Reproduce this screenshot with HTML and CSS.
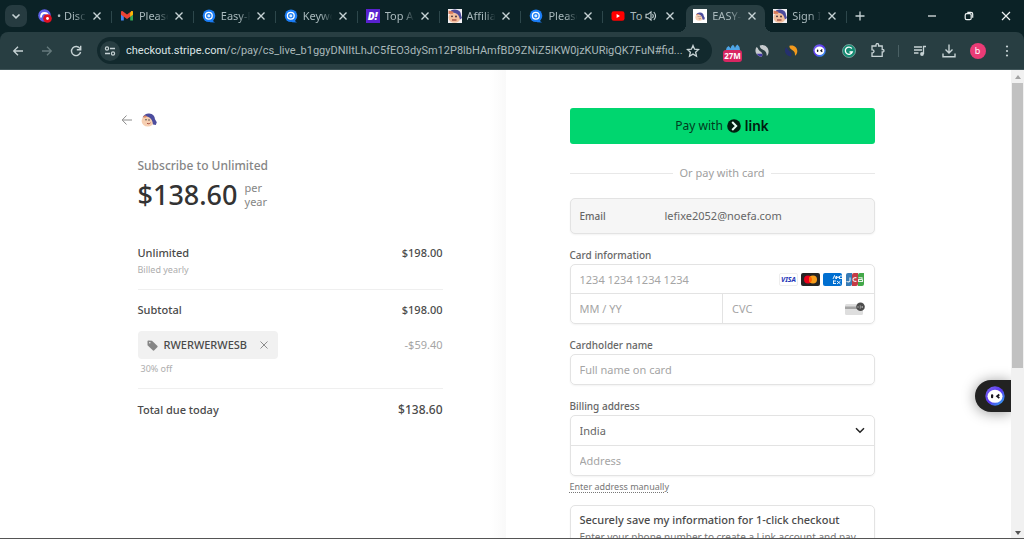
FILE: index.html
```html
<!DOCTYPE html>
<html lang="en">
<head>
<meta charset="utf-8">
<title>EASY-PEASY.AI checkout</title>
<link rel="stylesheet" href="styles.css">
</head>
<body>
<svg class="defs" aria-hidden="true">
  <symbol id="x" viewBox="0 0 10 10"><path d="M1.500 1.500l7 7M8.500 1.500l-7 7" fill="none" stroke="currentColor" stroke-width="1.400"/></symbol>
  <symbol id="q" viewBox="0 0 14 14"><circle cx="7" cy="6.800" r="6.300" fill="#1b7df5"/><path d="M8 10l5 3.600-5-.4z" fill="#1b7df5"/><circle cx="6.800" cy="6.800" r="3.400" fill="none" stroke="#fff" stroke-width="1.300"/><circle cx="6.800" cy="6.800" r="1.500" fill="#d9ebff"/></symbol>
  <symbol id="face" viewBox="0 0 16 14"><ellipse cx="6.800" cy="8" rx="6.200" ry="5.600" fill="#f6cfb2"/><path d="M1.500 4.500C3 1.500 5.500.4 8.200.6c3.600.3 5.600 2.300 5.800 5.600l1.800 3-1 2.800-2.800-.4-.5-2.600C11 6.500 9 4.600 6.800 3.800 5 3.300 3 3.500 1.500 4.500z" fill="#4c4d9e"/><path d="M2 4.200C3 2.500 4.500 2 6.200 3.500L4 4.800z" fill="#e08a62"/><circle cx="5" cy="6.800" r=".7" fill="#333"/><circle cx="8" cy="7" r=".7" fill="#333"/><path d="M6 10.300c1.500.8 2.500.5 3.500-.5" stroke="#a3473a" stroke-width=".9" fill="none"/></symbol>
  <symbol id="facebig" viewBox="0 0 14 14"><path d="M0 0h14v14H0z" fill="#f3f1f4"/><ellipse cx="6.500" cy="8.500" rx="6" ry="5.300" fill="#f3bf9d"/><path d="M1 3.500C2.500 1.500 4.500.5 7 .6c3.500.2 6 2 6 5.400l1 3-2 1.500-1-3C10 5.500 8.500 4.300 6 3.800z" fill="#4c4a9b"/><path d="M.5 1.500l5 1.300-.5 2L.5 5z" fill="#da7c5a"/><circle cx="4" cy="7.300" r=".9" fill="#382c37"/><circle cx="8" cy="7.500" r=".9" fill="#382c37"/><path d="M4 11h4.500" stroke="#963b35" stroke-width="1.200"/></symbol>
  <symbol id="facesmall" viewBox="0 0 14 14"><path d="M0 0h14v14H0z" fill="#fff"/><use href="#face" x="2" y="3" width="10" height="9"/></symbol>
  <symbol id="bot" viewBox="0 0 20 20"><linearGradient id="botg" x2="1" y2="1"><stop offset="0" stop-color="#7b6cf0"/><stop offset=".5" stop-color="#5a35f0"/><stop offset="1" stop-color="#28b7ef"/></linearGradient><circle cx="10" cy="10" r="9.700" fill="url(#botg)"/><ellipse cx="10" cy="10.300" rx="7.500" ry="6.500" fill="#fff"/><rect x="6" y="8.300" width="2.200" height="4" rx="1" fill="#17151f"/><path d="M14.300 8.500l-2.200 1.800 2.200 1.800" fill="none" stroke="#17151f" stroke-width="1.800"/></symbol>
</svg>

<header class="browser">
  <div class="strip">
    <button class="search-tabs" aria-label="Search tabs"><svg width="10" height="10" viewBox="0 0 10 10"><path d="M1.500 3.500L5 6.800l3.500-3.300" fill="none" stroke="currentColor" stroke-width="1.600"/></svg></button>
    <nav class="tabs">
      <div class="tab"><svg class="fav" viewBox="0 0 14 14"><circle cx="6.500" cy="6.500" r="6.300" fill="#5f62e8"/><path d="M3 8.500c0-3 1-4.500 3.500-4.500S10 5 10 7" fill="none" stroke="#fff" stroke-width="1.800"/><circle cx="9.500" cy="9.500" r="4.300" fill="#e01020"/><circle cx="9.500" cy="9.500" r="1.400" fill="#fff"/></svg><span class="name">• Discord</span><button class="close" aria-label="Close tab"><svg><use href="#x"/></svg></button></div>
      <div class="tab"><svg class="fav" viewBox="0 0 14 14"><path d="M1 2.500v9h2.800V6.300z" fill="#4285f4"/><path d="M13 2.500v9h-2.800V6.300z" fill="#34a853"/><path d="M1 3.200v2.600l6 4.300 6-4.300V3.200c0-1-1-1.400-1.700-.9L7 5.600 2.700 2.300C2 1.800 1 2.200 1 3.200z" fill="#ea4335"/><path d="M10.200 4.200v3.500L13 5.600V3.200c0-1.200-1.200-1.500-1.800-1z" fill="#fbbc04"/></svg><span class="name">Please con</span><button class="close" aria-label="Close tab"><svg><use href="#x"/></svg></button></div>
      <div class="tab"><svg class="fav"><use href="#q"/></svg><span class="name">Easy-Peasy</span><button class="close" aria-label="Close tab"><svg><use href="#x"/></svg></button></div>
      <div class="tab"><svg class="fav"><use href="#q"/></svg><span class="name">Keyword</span><button class="close" aria-label="Close tab"><svg><use href="#x"/></svg></button></div>
      <div class="tab"><span class="fav dealify">D!</span><span class="name">Top AI</span><button class="close" aria-label="Close tab"><svg><use href="#x"/></svg></button></div>
      <div class="tab"><svg class="fav"><use href="#facebig"/></svg><span class="name">Affiliate</span><button class="close" aria-label="Close tab"><svg><use href="#x"/></svg></button></div>
      <div class="tab"><svg class="fav"><use href="#q"/></svg><span class="name">Please con</span><button class="close" aria-label="Close tab"><svg><use href="#x"/></svg></button></div>
      <div class="tab last"><svg class="fav" viewBox="0 0 14 14"><rect x=".5" y="2.300" width="13" height="9.400" rx="2.300" fill="#f00"/><path d="M5.600 5v4L9 7z" fill="#fff"/></svg><span class="name">To</span><svg class="sound" viewBox="0 0 12 12"><path d="M1 4.300h2L6 1.800v8.400L3 7.700H1z" fill="none" stroke="currentColor" stroke-width="1.100"/><path d="M7.500 4q1.500 2 0 4M8.800 2q3.500 4 0 8" fill="none" stroke="currentColor" stroke-width="1.100"/></svg><button class="close" aria-label="Close tab"><svg><use href="#x"/></svg></button></div>
      <div class="tab active"><svg class="fav"><use href="#facesmall"/></svg><span class="name">EASY-PEASY</span><button class="close" aria-label="Close tab"><svg><use href="#x"/></svg></button></div>
      <div class="tab"><svg class="fav"><use href="#facebig"/></svg><span class="name">Sign In</span><button class="close" aria-label="Close tab"><svg><use href="#x"/></svg></button></div>
    </nav>
    <button class="icon new-tab" aria-label="New tab"><svg width="10" height="10" viewBox="0 0 10 10"><path d="M5 .5v9M.5 5h9" stroke="currentColor" stroke-width="1.300"/></svg></button>
    <div class="window-controls">
      <button class="icon" aria-label="Minimize"><svg width="10" height="10" viewBox="0 0 10 10"><path d="M1 5h8" stroke="currentColor" stroke-width="1.200"/></svg></button>
      <button class="icon" aria-label="Restore"><svg width="10" height="10" viewBox="0 0 10 10"><rect x="1.200" y="2.700" width="6" height="6" rx="1.500" fill="none" stroke="currentColor" stroke-width="1.200"/><path d="M3.300 1.300H7Q8.700 1.300 8.700 3v3.700" fill="none" stroke="currentColor" stroke-width="1.200"/></svg></button>
      <button class="icon" aria-label="Close window"><svg width="10" height="10" viewBox="0 0 10 10"><path d="M1 1l8 8M9 1L1 9" stroke="currentColor" stroke-width="1.200"/></svg></button>
    </div>
  </div>

  <div class="toolbar">
    <button class="icon nav" aria-label="Back"><svg width="12" height="12" viewBox="0 0 12 12"><path d="M11 6H2M6 1.700L1.700 6 6 10.300" fill="none" stroke="currentColor" stroke-width="1.300"/></svg></button>
    <button class="icon nav" disabled aria-label="Forward"><svg width="12" height="12" viewBox="0 0 12 12"><path d="M1 6h9M6 1.700L10.300 6 6 10.300" fill="none" stroke="currentColor" stroke-width="1.300"/></svg></button>
    <button class="icon nav" aria-label="Reload"><svg width="12" height="12" viewBox="0 0 12 12"><path d="M10 3.600A4.600 4.600 0 1 0 10.600 7" fill="none" stroke="currentColor" stroke-width="1.400"/><path d="M10.700.8v4H6.800" fill="none" stroke="currentColor" stroke-width="1.400"/></svg></button>
    <div class="omnibox">
      <button class="site-info" aria-label="Site information"><svg width="12" height="12" viewBox="0 0 12 12"><circle cx="3" cy="3.500" r="1.600" fill="none" stroke="currentColor" stroke-width="1.200"/><path d="M6 3.500h5M1 8.500h5" stroke="currentColor" stroke-width="1.400"/><circle cx="9" cy="8.500" r="1.600" fill="none" stroke="currentColor" stroke-width="1.200"/></svg></button>
      <span class="url">checkout.stripe.com<span class="path">/c/pay/cs_live_b1ggyDNlItLhJC5fEO3dySm12P8lbHAmfBD9ZNiZ5IKW0jzKURigQK7FuN#fid...</span></span>
      <button class="icon bookmark" aria-label="Bookmark"><svg width="14" height="14" viewBox="0 0 14 14"><path d="M7 1.500l1.600 3.700 4 .3-3 2.700.9 4L7 10.100l-3.500 2.100.9-4-3-2.700 4-.3z" fill="none" stroke="currentColor" stroke-width="1.300"/></svg></button>
    </div>
    <div class="extensions">
      <button class="icon ranked" aria-label="Traffic rank"><svg width="14" height="6" viewBox="0 0 14 6"><path d="M0 6q0-2.500 2.500-4Q4 3 4.500 4.500 5 2 7 .8 8.500 2 9 4 9.500 1.500 11.500.5 14 2.500 14 6z" fill="#4fa6e8"/></svg><span class="badge">27M</span></button>
      <button class="icon" aria-label="Extension"><svg width="14" height="14" viewBox="0 0 14 14"><path d="M1.300 3.200C3 2.600 3 6 5.500 7.500c2 1.300 2.300 3 1.300 5.300C1.500 12.500-1 7.500 1.300 3.200z" fill="#c7cbce"/><path d="M1.500 9.700h5.800q.3 1.500-.6 3.100Q3.500 12.800 1.500 9.700z" fill="#4437a4"/><path d="M4.800 1.500C9-.5 13.700 3 13.600 7.500c0 2-.6 3.500-1.800 4.500C11.500 8.500 11 7.500 8.500 6 6.500 5 4.500 3.500 4.800 1.500z" fill="#c7cbce"/></svg></button>
      <button class="icon" aria-label="Extension"><svg width="14" height="14" viewBox="0 0 14 14"><path d="M1.800 3.500C3.500 3 3.500 6 6 7.500c1.500 1 2 2.800 1 5C2 12.200-.5 7.500 1.800 3.500z" fill="#25306e"/><path d="M5.500 1.800C9.500.3 13.500 3.200 13.300 7.500c-.1 1.800-1 3.400-2.300 4.300C11 8.500 10.500 7.500 8.500 6.200 6.500 5 5 3.700 5.500 1.800z" fill="#f39a1d"/></svg></button>
      <button class="icon" aria-label="Assistant"><svg width="13" height="13"><use href="#bot"/></svg></button>
      <button class="icon" aria-label="Writing checker"><svg width="14" height="14" viewBox="0 0 14 14"><circle cx="7" cy="7" r="6.500" fill="#138a72" stroke="#a9c8c2" stroke-width=".6"/><path d="M9.800 4.500A3.600 3.600 0 1 0 10.300 8H7.500" fill="none" stroke="#fff" stroke-width="1.300"/></svg></button>
      <button class="icon" aria-label="Extensions"><svg width="15" height="15" viewBox="0 0 15 15"><path d="M2 3h4V1.800a1 1 0 0 1 2.600 0V3h3.600v3.500h.6a1.100 1.100 0 0 1 0 2.400h-.6v4.500H2V9.800h.5a1.500 1.500 0 0 0 0-3H2z" fill="none" stroke="currentColor" stroke-width="1.300"/></svg></button>
    </div>
    <span class="divider"></span>
    <button class="icon" aria-label="Media"><svg width="14" height="12" viewBox="0 0 14 12"><path d="M1 2h8M1 5h8M1 8h4.500M10.500 9V1.500H13" fill="none" stroke="currentColor" stroke-width="1.300"/><circle cx="9" cy="9" r="1.900" fill="currentColor"/></svg></button>
    <button class="icon" aria-label="Downloads"><svg width="14" height="14" viewBox="0 0 14 14"><path d="M7 .5v8M3.500 5.500L7 9l3.500-3.500M1 9.500v3.300h12V9.500" fill="none" stroke="currentColor" stroke-width="1.400"/></svg></button>
    <button class="icon" aria-label="Profile"><span class="avatar">b</span></button>
    <button class="icon" aria-label="Menu"><svg width="4" height="14" viewBox="0 0 4 14"><g fill="currentColor"><circle cx="2" cy="2.500" r="1.100"/><circle cx="2" cy="7" r="1.100"/><circle cx="2" cy="11.500" r="1.100"/></g></svg></button>
  </div>
</header>

<div class="viewport">
  <main class="checkout">
    <section class="summary">
      <div class="column">
        <a class="back" href="#" aria-label="Back to Easy-Peasy"><svg width="12" height="12" viewBox="0 0 12 12"><path d="M11 6H1.500M5.500 1.500L1.200 6l4.300 4.500" fill="none" stroke="#8c8c8c" stroke-width="1"/></svg><svg width="16" height="14"><use href="#face"/></svg></a>
        <h1 class="title">Subscribe to Unlimited</h1>
        <div class="price"><strong>$138.60</strong><span>per<br>year</span></div>
        <div class="line first"><span>Unlimited</span><span>$198.00</span></div>
        <div class="note">Billed yearly</div>
        <div class="line ruled"><span>Subtotal</span><span>$198.00</span></div>
        <div class="promo">
          <div class="chip"><svg width="11" height="11" viewBox="0 0 11 11"><path d="M.5 1.500v3.700L6 10.500q.5.300 1 0l3.500-3.500q.3-.5 0-1L5 .8 1.200.5Q.5.5.5 1.500z" fill="#858585"/><circle cx="2.800" cy="2.800" r=".8" fill="#f1f1f1"/></svg><span>RWERWERWESB</span><button aria-label="Remove promotion code"><svg width="10" height="10" viewBox="0 0 10 10"><path d="M1.500 1.500l7 7M8.500 1.500l-7 7" stroke="#8c8c8c" stroke-width="1"/></svg></button></div>
          <span class="discount">-$59.40</span>
        </div>
        <div class="note off">30% off</div>
        <div class="line ruled total"><span>Total due today</span><span>$138.60</span></div>
      </div>
    </section>

    <section class="payment">
      <form class="column">
        <button type="button" class="link-pay">Pay with <svg width="14" height="14" viewBox="0 0 14 14"><circle cx="7" cy="7" r="6.800" fill="#011e0f"/><path d="M5.200 3l4 4-4 4" fill="none" stroke="#e8fff3" stroke-width="2"/></svg><b>link</b></button>
        <div class="separator">Or pay with card</div>
        <div class="email"><span>Email</span><span>lefixe2052@noefa.com</span></div>

        <label class="label" for="number">Card information</label>
        <div class="group card">
          <div class="cell number"><input id="number" placeholder="1234 1234 1234 1234">
            <span class="brands">
              <svg width="19" height="13" viewBox="0 0 19 13"><rect x=".5" y=".5" width="18" height="12" rx="1.500" fill="#fff" stroke="#eee"/><text class="visa" x="9.500" y="9" text-anchor="middle">VISA</text></svg>
              <svg width="19" height="13" viewBox="0 0 19 13"><rect width="19" height="13" rx="2" fill="#252525"/><circle cx="7" cy="6.500" r="4" fill="#eb001b"/><circle cx="12" cy="6.500" r="4" fill="#f79e1b"/><path d="M9.500 3.400a4 4 0 0 1 0 6.200 4 4 0 0 1 0-6.200z" fill="#ff5f00"/></svg>
              <svg width="19" height="13" viewBox="0 0 19 13"><rect width="19" height="13" rx="2" fill="#016fd0"/><path d="M10 6l1.500-3.500L13 6M13.500 6V3l1.500 2 1.500-2v3M17 3h2M17 5.500h2M10 8h3M10 10.500h3M10.500 7.500v3.500M14 8l3.500 3M17.500 8L14 11" stroke="#fff" stroke-width=".9" fill="none"/></svg>
              <svg width="19" height="13" viewBox="0 0 19 13"><path d="M3 0h4v11q0 2-2 2H1V2q0-2 2-2z" fill="#377bb5"/><path d="M9 0h4v11q0 2-2 2H7V2q0-2 2-2z" fill="#c43a45"/><path d="M15 0h4v11q0 2-2 2h-4V2q0-2 2-2z" fill="#43a849"/><path d="M1.500 8.500q3.500 1 3.500-1V4.500M11.500 4.700q-3.500-.5-3.500 1.800t3.500 1.800M13.500 4.700h3.500v1.800h-3.500v2h4v-2" fill="none" stroke="#eee" stroke-width="1.100"/></svg>
            </span>
          </div>
          <div class="cell"><input aria-label="Expiration" placeholder="MM / YY"></div>
          <div class="cell cvc"><input aria-label="CVC" placeholder="CVC"><svg width="20" height="14" viewBox="0 0 20 14"><rect x="0" y="2" width="18" height="11" rx="1.500" fill="#dedede"/><path d="M0 4.500h18v2.500H0z" fill="#a5a5a5"/><circle cx="15.500" cy="4.800" r="4.300" fill="#4c4c4c"/><path d="M13 4v2M14.500 4H16v2h-1.500M17.500 4v2" stroke="#bbb" stroke-width=".7" fill="none"/></svg></div>
        </div>

        <label class="label" for="holder">Cardholder name</label>
        <div class="group"><div class="cell"><input id="holder" placeholder="Full name on card"></div></div>

        <label class="label" for="country">Billing address</label>
        <div class="group">
          <div class="cell country"><select id="country"><option>India</option></select><svg width="10" height="7" viewBox="0 0 10 7"><path d="M1 1.200l4 4 4-4" fill="none" stroke="#222" stroke-width="1.500"/></svg></div>
          <div class="cell ruled-cell"><input aria-label="Address" placeholder="Address"></div>
        </div>
        <a class="manual" href="#">Enter address manually</a>
        <div class="save"><strong>Securely save my information for 1-click checkout</strong><p>Enter your phone number to create a Link account and pay faster on Easy-Peasy.AI and everywhere Link is accepted.</p></div>
      </form>
    </section>
    <button class="assistant" aria-label="Open assistant"><svg width="20" height="20"><use href="#bot"/></svg></button>
  </main>
  <div class="scrollbar"><span class="arrow up"></span><span class="thumb"></span><span class="arrow down"></span></div>
</div>
</body>
</html>
```

FILE: styles.css
```css
* { box-sizing: border-box; }
body {
  margin: 0;
  height: 100vh;
  display: flex;
  flex-direction: column;
  overflow: hidden;
  font: 11px/18px "Noto Sans", "Open Sans", sans-serif;
  color: #4a4a4a;
  background: #fff;
}
button, input, select { font: inherit; color: inherit; border: 0; padding: 0; background: none; }
svg { display: block; flex: none; }
.defs { position: absolute; width: 0; height: 0; }

/* Browser frame */
.browser { flex: none; background: #0b2226; color: #c7d3d5; }
.strip { display: flex; align-items: center; height: 32px; }
.search-tabs {
  width: 22px; height: 22px; margin-left: 5px; border-radius: 7px;
  background: #263b40; display: grid; place-items: center;
}
.tabs { display: flex; flex: 0 1 817px; min-width: 0; margin-left: 3px; align-self: stretch; }
.tab {
  position: relative; flex: 1 1 0; min-width: 0; display: flex; align-items: center;
  padding: 0 10px 0 8px;
}
.tab::after { content: ""; position: absolute; right: 0; top: 11px; width: 1px; height: 12px; background: #2d474b; }
.tab.active::after, .tab.last::after { display: none; }
.fav { width: 14px; height: 14px; flex: none; }
.dealify { background: #5a22d0; color: #fff; font: italic 900 10px/14px "Noto Sans", sans-serif; text-align: center; }
.name {
  flex: 1; min-width: 0; margin: 0 5px; overflow: hidden; white-space: nowrap;
  color: #a9b9bc; -webkit-mask-image: linear-gradient(90deg, #000 60%, transparent 98%);
  mask-image: linear-gradient(90deg, #000 60%, transparent 98%);
}
.last .name { margin-right: 0; mask-image: none; -webkit-mask-image: none; }
.sound { width: 12px; height: 12px; margin-right: 8px; }
.close { width: 10px; height: 10px; }
.close svg { width: 10px; height: 10px; }
.active { background: #283e42; margin: 5px 0 0 1px; padding: 0 8px 5px 7px; border-radius: 8px 8px 0 0; }
.active::before {
  content: ""; position: absolute; left: -8px; right: -8px; bottom: 0; height: 8px;
  background:
    radial-gradient(circle at 0 0, transparent 8px, #283e42 8px) left / 8px 8px no-repeat,
    radial-gradient(circle at 100% 0, transparent 8px, #283e42 8px) right / 8px 8px no-repeat;
}
.icon { display: grid; place-items: center; width: 29px; height: 28px; flex: none; }
.icon:disabled { color: #667a7d; }
.new-tab { width: 26px; }
.window-controls { display: flex; margin-left: auto; color: #eef2f2; }
.window-controls .icon { width: 37px; }
.toolbar {
  display: flex; align-items: center; height: 38px; padding: 0 3px; background: #283e42;
  border-radius: 8px 8px 0 0; border-bottom: 1px solid #41565a;
}
.omnibox {
  display: flex; align-items: center; flex: 1; min-width: 0; height: 27px; margin-left: 7px;
  padding: 0 10px 0 3px; border-radius: 14px; background: #12292d;
}
.omnibox .bookmark { width: 18px; margin-left: auto; }
.site-info { width: 20px; height: 20px; border-radius: 10px; background: #283e42; display: grid; place-items: center; flex: none; }
.url {
  margin-left: 6px; min-width: 0; overflow: hidden; white-space: nowrap;
  font-family: Roboto, "Noto Sans", sans-serif; font-size: 11px; color: #dbe4e5;
}
.path { color: #a9b8ba; }
.extensions { display: flex; margin-left: 6px; }
.ranked { position: relative; padding-bottom: 8px; }
.badge {
  position: absolute; left: 5px; top: 13px; width: 19px; height: 12px; border-radius: 3px;
  background: #d92662; color: #fff; font: bold 8px/12px "Noto Sans", sans-serif; text-align: center;
}
.divider { width: 1px; height: 12px; margin: 0 6px; background: #4a6064; }
.avatar { width: 16px; height: 16px; border-radius: 8px; background: #eb3b76; color: #fff; font-size: 9px; line-height: 16px; text-align: center; }

/* Page */
.viewport { display: flex; flex: 1; min-height: 0; border-bottom: 1px solid #555; }
.checkout { position: relative; flex: 1; min-width: 0; display: grid; grid-template-columns: 1fr 1fr; overflow: hidden; }
.column { width: 100%; max-width: 305px; }
.summary { display: flex; justify-content: flex-end; padding: 41px 63px 0 24px; background: linear-gradient(270deg, #f9f9f9, #fff 16px); }
.payment { padding: 38px 24px 0 64px; }
.back { display: flex; align-items: center; gap: 8px; height: 18px; margin: 0 0 28px -17px; }
.title { margin: 0; font-size: 12px; font-weight: 500; line-height: 18px; color: #858585; }
.price { display: flex; align-items: center; gap: 7px; height: 40px; }
.price strong { font-size: 27px; font-weight: 500; line-height: 40px; color: #333; }
.price span { line-height: 14px; color: #858585; }
.line { display: flex; justify-content: space-between; font-weight: 500; }
.first { margin-top: 29px; }
.note { font-size: 9px; line-height: 16px; color: #adadad; }
.ruled { border-top: 1px solid #efefef; margin-top: 11px; padding-top: 11px; }
.promo { display: flex; align-items: center; justify-content: space-between; margin-top: 12px; }
.chip { display: flex; align-items: center; height: 28px; padding: 0 9px; border-radius: 4px; background: #f1f1f1; font-weight: 500; }
.chip span { margin: 0 12px 0 6px; }
.chip button { display: block; }
.discount { color: #a5a5a5; }
.off { margin: 2px 0 0 3px; }
.total { padding-top: 12px; }
.total span:last-child { font-size: 12px; }

.link-pay {
  display: flex; align-items: center; justify-content: center; gap: 4px; width: 100%; height: 36px;
  border-radius: 3px; background: #00d66f; color: #023a1e; font-size: 12px; font-weight: 400;
}
.link-pay b { color: #011e0f; font: 600 14px/18px "Inter", sans-serif; }
.separator { display: flex; align-items: center; gap: 6px; margin: 20px 0 16px; color: #a0a0a0; }
.separator::before, .separator::after { content: ""; flex: 1; height: 1px; background: #e8e8e8; }
.email, .group, .save { border: 1px solid #e3e3e3; border-radius: 5px; box-shadow: 0 1px 2px #0000000d; }
.email { display: flex; align-items: center; height: 36px; padding: 0 9px; background: #f6f6f6; color: #666; }
.email span:first-child { width: 85px; font-size: 10px; font-weight: 500; }
.label { display: block; margin-top: 12px; font-size: 10px; font-weight: 500; line-height: 18px; color: #666; }
.cell { display: flex; align-items: center; min-width: 0; height: 29px; padding: 0 9px; }
.cell input, .cell select { flex: 1; min-width: 0; width: 100%; height: 27px; outline: 0; }
.cell input::placeholder { color: #a5a5a5; opacity: 1; }
.card { display: grid; grid-template-columns: 1fr 1fr; }
.number { grid-column: 1 / -1; border-bottom: 1px solid #e3e3e3; }
.cvc { border-left: 1px solid #e3e3e3; }
.brands { display: flex; gap: 3px; margin-right: 1px; }
.visa { font: italic bold 7px "Noto Sans", sans-serif; fill: #2436b8; }
.country select { appearance: none; color: #666; }
.ruled-cell { border-top: 1px solid #e3e3e3; height: 30px; }
.manual { display: table; margin-top: 2px; font-size: 9px; line-height: 18px; color: #777; text-decoration: underline dotted; text-underline-offset: 2px; }
.save { margin-top: 9px; padding: 5px 9px; }
.save strong { display: block; font-weight: 500; }
.save p { margin: 0; font-size: 10px; line-height: 16px; color: #777; }

.assistant {
  position: absolute; right: 0; top: 310px; width: 36px; height: 32px; padding-left: 10px;
  border-radius: 16px 0 0 16px; background: #222; box-shadow: 0 1px 14px #0006;
}
.scrollbar { display: flex; flex-direction: column; align-items: center; width: 13px; padding: 5px 0 3px; background: #f1f1f1; }
.arrow { border: 3px solid transparent; }
.up { border-top: 0; border-bottom: 4px solid #a3a3a3; }
.down { border-bottom: 0; border-top: 4px solid #555; margin-top: auto; }
.thumb { width: 11px; height: 62%; margin-top: 4px; background: #c1c1c1; }
```
